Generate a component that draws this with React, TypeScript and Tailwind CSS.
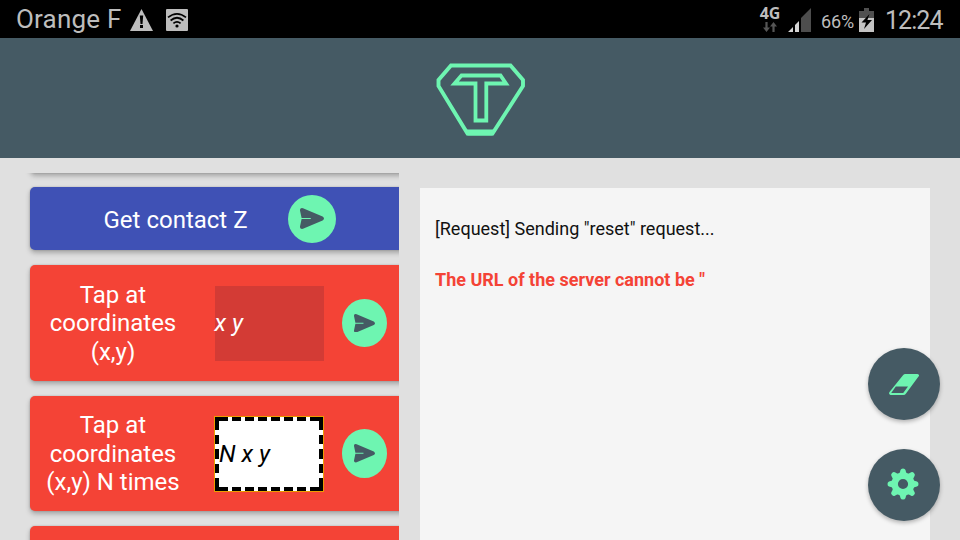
import type { ReactNode } from "react";

function SendIcon({ className }: { className: string }) {
  return (
    <svg className={className} viewBox="0 0 24 21" preserveAspectRatio="none">
      <path
        d="M3 .2 22.6 8.4Q25.4 10.5 22.6 12.6L3 20.8Q-.2 21.4 0 18.6L1.6 11H10.8V10H1.6L0 2.4Q-.2-.4 3 .2Z"
        fill="#455a64"
      />
    </svg>
  );
}

function Card({ className, children }: { className: string; children: ReactNode }) {
  return (
    <div
      className={`flex w-[380px] shrink-0 items-center rounded-[5px] text-center text-[24px] leading-[28.5px] text-white shadow-[0_3px_5px_rgba(0,0,0,0.26),0_0_2px_rgba(0,0,0,0.2)] ${className}`}
    >
      {children}
    </div>
  );
}

function SendButton() {
  return (
    <button className="ml-[18px] flex h-[48.5px] w-[45px] items-center rounded-[50%] bg-[#6ef5b1] pl-3">
      <SendIcon className="h-[18.5px] w-[21px]" />
    </button>
  );
}

function StatusBar() {
  return (
    <div className="flex h-[38px] shrink-0 items-center bg-black text-[#bdbdbd]">
      <span className="ml-4 w-[105px] pt-px text-[26px] leading-[37px] tracking-[0.2px] whitespace-nowrap">Orange F</span>
      <svg className="mt-[2px] ml-[9px] h-[22px] w-[23px]" viewBox="0 0 23 22">
        <path d="M11.5 0 23 22H0Z" fill="#bdbdbd" />
        <path d="M9.8 6.5h3.4l-.7 8.5h-2ZM10 16h3v3h-3Z" fill="#000" />
      </svg>
      <svg className="mt-[2px] ml-[13px] h-[22px] w-[22px]" viewBox="0 0 22 22">
        <rect width="22" height="22" rx="1" fill="#bdbdbd" />
        <g fill="none" stroke="#000" strokeWidth="1.7">
          <path d="M2 8.4Q11 1.2 20 8.4M4.6 11.5Q11 6 17.4 11.5M7.4 14.4Q11 11.2 14.6 14.4" />
        </g>
        <circle cx="11" cy="17" r="1.6" fill="#000" />
      </svg>
      <div className="ml-[571px] flex h-[38px] w-[22px] flex-col items-center pt-[5px]">
        <span className="font-['Open_Sans',sans-serif] text-[16px] leading-[16px] font-bold">4G</span>
        <svg className="mt-px h-[10px] w-[14px]" viewBox="0 0 14 10">
          <path d="M2.4 0h2.2v5.5H7L3.5 10 0 5.5h2.4ZM9.4 10h2.2V4.5H14L10.5 0 7 4.5h2.4Z" fill="#555" />
        </svg>
      </div>
      <svg className="mt-px ml-[7px] h-[24px] w-6" viewBox="0 0 24 24">
        <path d="M0 24 5 19v5ZM7 24v-7l4-4v11Z" fill="#d5d5d5" />
        <path d="M13 24V10L23 0v24Z" fill="#4d4d4d" />
      </svg>
      <span className="ml-[9px] w-[34px] pt-[5px] text-[18px] leading-[33px] tracking-[-0.1px]">66%</span>
      <svg className="mt-px ml-1 h-[24px] w-[15px]" viewBox="0 0 15 24">
        <path d="M5 0h5v3h5v7H0V3h5Z" fill="#505050" />
        <path d="M0 10h15v14H0Z" fill="#c4c4c4" />
        <path d="m10.5 6-8 8.5H7l-2 6.5 8-9H8.4Z" fill="#000" />
      </svg>
      <span className="ml-[11px] pt-[4px] text-[25px] leading-[34px] tracking-[-0.95px]">12:24</span>
    </div>
  );
}

export default function App() {
  return (
    <div className="relative flex h-[540px] w-[960px] flex-col overflow-hidden bg-[#e0e0e0] font-[Roboto,sans-serif]">
      <StatusBar />
      <header className="flex h-[120px] shrink-0 justify-center bg-[#455a64] pt-[25px] pl-[2px]">
        <svg className="h-[74px] w-[90px]" viewBox="0 0 90 74" fill="none" stroke="#6ef5b1">
          <path d="M15 2.5H74.5L87 17V23L56.5 70.5H31.5L2.5 23V17Z" strokeWidth="3.9" />
          <path d="M28.5 66.5h31l-3 6h-25Z" fill="#6ef5b1" stroke="none" />
          <path d="M25.5 12.5H64.5L70 20.5H50.3V57.5H39.5V20.5H18.5Z" strokeWidth="3.8" />
        </svg>
      </header>
      <main className="flex min-h-0 flex-1">
        <section className="mt-[15px] flex w-[399px] shrink-0 flex-col overflow-hidden pl-[30px]">
          <Card className="-mt-[60px] h-[60px] bg-[#3f51b5]">{null}</Card>
          <Card className="mt-[14px] h-[63px] bg-[#3f51b5]">
            <span className="ml-[73.5px] w-[143.5px] pt-[3px] whitespace-nowrap">Get contact Z</span>
            <button className="ml-[41px] flex size-12 items-center rounded-full bg-[#6ef5b1] pl-3">
              <SendIcon className="h-[21px] w-6" />
            </button>
          </Card>
          <Card className="mt-[15px] h-[115.5px] bg-[#f44336]">
            <p className="ml-2 w-[150px] pt-[1.4px]">Tap at<br />coordinates<br />(x,y)</p>
            <div className="mt-px ml-[26.5px] flex h-[75px] w-[109.5px] items-center bg-[#d33b35] italic">x y</div>
            <SendButton />
          </Card>
          <Card className="mt-[15px] h-[115.5px] bg-[#f44336]">
            <p className="ml-2 w-[150px] pt-px">Tap at<br />coordinates<br />(x,y) N times</p>
            <div className="relative mt-[2px] ml-[26px] flex h-[76px] w-[110px] items-center border border-[#ed9b00] bg-white pl-1 text-black italic">
              <svg className="absolute inset-0 h-full w-full" viewBox="0 0 108 74" fill="none" stroke="#000" strokeWidth="4">
                <path d="M0 2H108M0 72H108" strokeDasharray="13 4 9 4 9 4 9 4 9 4 9 4 9 4 13 100" />
                <path d="M2 0V74M106 0V74" strokeDasharray="13 5 9 5 10 5 9 5 13 100" />
              </svg>
              <span>N x y</span>
            </div>
            <SendButton />
          </Card>
          <Card className="mt-[15px] h-[115.5px] bg-[#f44336]">{null}</Card>
        </section>
        <section className="mt-[30px] ml-[21px] w-[510px] bg-[#f5f5f5] px-[15px] pt-[30px] text-[18px] leading-[21px] text-[#111]">
          <p>[Request] Sending "reset" request...</p>
          <p className="mt-[30px] font-bold text-[#f44336]">The URL of the server cannot be "</p>
        </section>
      </main>
      <div className="absolute top-[348.4px] left-[868.4px] flex flex-col gap-[28.5px]">
        <button className="flex size-[72px] items-center justify-center rounded-full bg-[#455a64] shadow-[0_2px_4px_rgba(0,0,0,0.28)]">
          <svg className="mr-px h-[21px] w-[30px]" viewBox="0 0 30 21">
            <path
              d="M16.2 0H28.5Q31 .6 29.5 2.5L17 19.5Q16 21 14.5 21H1.5Q-.8 20 .5 18L14 1.2Q15 0 16.2 0ZM6.8 12.5 2.2 19H14.2L19 12.5Z"
              fill="#6ef5b1"
              fillRule="evenodd"
            />
          </svg>
        </button>
        <button className="flex size-[72px] items-center justify-center rounded-full bg-[#455a64] shadow-[0_2px_4px_rgba(0,0,0,0.28)]">
          <svg className="mr-[2px] mb-px h-8 w-8" viewBox="-16 -16 32 32" fill="#6ef5b1">
            {[0, 45, 90, 135, 180, 225, 270, 315].map((angle) => (
              <path key={angle} transform={`rotate(${angle})`} d="M-5.5-9Q-3.2-10-2.5-14Q-2-15.5 0-15.5T2.5-14Q3.2-10 5.5-9Z" />
            ))}
            <circle r="8.3" fill="none" stroke="#6ef5b1" strokeWidth="6.4" />
          </svg>
        </button>
      </div>
    </div>
  );
}
